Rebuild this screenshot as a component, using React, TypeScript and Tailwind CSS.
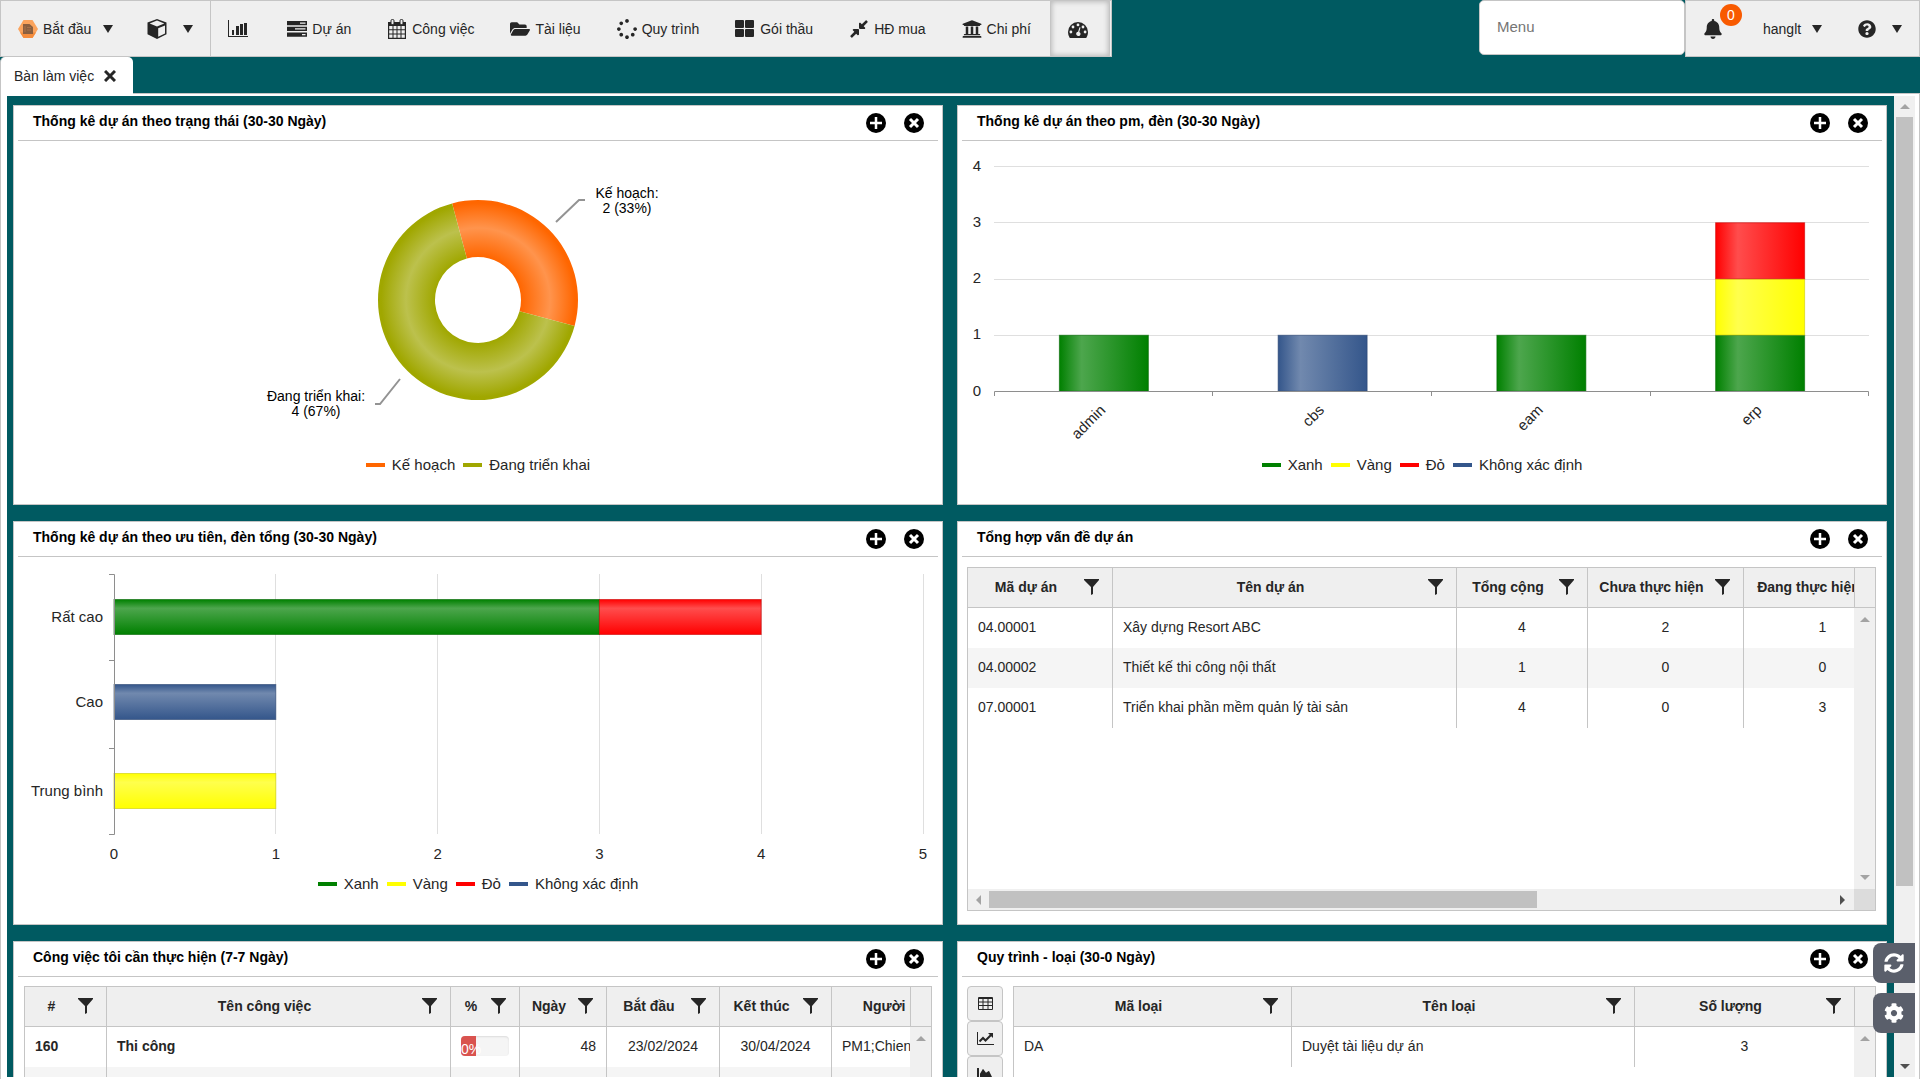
import type { ReactNode } from 'react'
import { FaBell, FaChartArea, FaCog, FaCompressAlt, FaFolderOpen, FaQuestionCircle, FaSpinner, FaSyncAlt, FaUniversity } from 'react-icons/fa'

type Tone = 'green' | 'yellow' | 'red' | 'blue'

const TONES: Record<Tone, { base: string; light: string; edge: string }> = {
  green: { base: '#008000', light: '#4da64d', edge: '#006600' },
  yellow: { base: '#ffff00', light: '#ffff4d', edge: '#cccc00' },
  red: { base: '#ff0000', light: '#ff4d4d', edge: '#cc0000' },
  blue: { base: '#34568b', light: '#7189ae', edge: '#2a456f' },
}

const LIGHT_LEGEND = [
  { label: 'Xanh', color: '#008000' },
  { label: 'Vàng', color: '#ffff00' },
  { label: 'Đỏ', color: '#ff0000' },
  { label: 'Không xác định', color: '#34568b' },
]

/* ---------- icons ---------- */

const Caret = () => (
  <svg viewBox="0 0 10 8" className="h-2 w-[10px] shrink-0 fill-current"><path d="M0 0h10L5 8z" /></svg>
)

const BarChartIcon = () => (
  <svg viewBox="0 0 20 18" className="h-[18px] w-5 fill-current">
    <path d="M0 0h1v16h19v1H0zM4 10h2v5H4zM8 6h3v9H8zM12 4h3v11h-3zM16 3h3v12h-3z" />
  </svg>
)

const TasksIcon = () => (
  <svg viewBox="0 0 20 16" className="h-4 w-5">
    <path fill="currentColor" d="M0 0h20v4.300H0zM0 5.700h20V10H0zM0 11.500h20v4.300H0z" />
    <path fill="#efefef" d="M13 1.500h5.500v1.200H13zM8 7.200h10.500v1.200H8zM15 13h3.500v1.200H15z" />
  </svg>
)

const CalendarIcon = () => (
  <svg viewBox="0 0 20 20" className="size-5">
    <path fill="currentColor" d="M1 3h18v17H1z" />
    <path fill="#efefef" d="M2.200 7h3.300v3.300H2.200zM6.500 7h3v3.300h-3zM10.500 7h3v3.300h-3zM14.500 7h3.300v3.300h-3.300zM2.200 11.300h3.300v3.100H2.200zM6.500 11.300h3v3.100h-3zM10.500 11.300h3v3.100h-3zM14.500 11.300h3.300v3.100h-3.300zM2.200 15.400h3.300v3.300H2.200zM6.500 15.400h3v3.300h-3zM10.500 15.400h3v3.300h-3zM14.500 15.400h3.300v3.300h-3.300z" />
    <rect x="4" y="0.500" width="3" height="5" rx="1.200" fill="#efefef" stroke="currentColor" />
    <rect x="13" y="0.500" width="3" height="5" rx="1.200" fill="#efefef" stroke="currentColor" />
  </svg>
)

const GridIcon = () => (
  <svg viewBox="0 0 20 17" className="h-[17px] w-5 fill-current">
    <rect x="0" y="0" width="9" height="8" rx="1" /><rect x="10" y="0" width="9" height="8" rx="1" />
    <rect x="0" y="9" width="9" height="8" rx="1" /><rect x="10" y="9" width="9" height="8" rx="1" />
  </svg>
)

const GaugeIcon = () => (
  <svg viewBox="0 0 20 16" className="h-4 w-5">
    <path fill="currentColor" d="M0 10a10 10 0 0 1 20 0c0 2.200-.6 4-1.500 5.400-.2.400-.5.600-.9.600H2.400c-.4 0-.7-.2-.9-.6A10 10 0 0 1 0 10z" />
    <g fill="#efefef">
      <circle cx="2.900" cy="10" r="1.400" /><circle cx="5" cy="5" r="1.400" /><circle cx="10" cy="2.900" r="1.400" />
      <circle cx="15" cy="5" r="1.400" /><circle cx="17.100" cy="10" r="1.400" />
      <path d="M11.500 5.200l1 .3-1.200 4.400a2.200 2.200 0 1 1-1.200-.2z" />
    </g>
  </svg>
)

const CubeIcon = () => (
  <svg viewBox="0 0 20 20" className="size-5">
    <path fill="currentColor" d="M10 0l9.500 3.600v11.600L10 20 .5 15.200V3.600z" />
    <path fill="#efefef" d="M10 1.600l7.300 2.800L10 7.400 2.700 4.400zM11.200 9.300l6.800-2.900v8l-6.800 3.300z" />
  </svg>
)

const HexIcon = () => (
  <svg viewBox="0 0 20 18" className="h-[18px] w-5">
    <path fill="#fba35c" d="M5.500 0h9L20 9l-5.500 9h-9L0 9z" />
    <path fill="#f58c3c" d="M2 12.500h16L14.500 18h-9z" />
    <path fill="#8b5f3f" d="M5 4h6.500L15 7v7H5z" />
    <path stroke="#a87048" strokeWidth="1" d="M7 6v6M9 7.500h4M9 10h4" />
  </svg>
)

const CloseIcon = () => (
  <svg viewBox="0 0 12 12" className="size-3"><path stroke="currentColor" strokeWidth="3" d="M1 1l10 10M11 1L1 11" /></svg>
)

const PlusCircle = () => (
  <svg viewBox="0 0 20 20" className="size-5"><circle cx="10" cy="10" r="10" /><path stroke="#fff" strokeWidth="2.500" d="M10 4v12M4 10h12" /></svg>
)

const CloseCircle = () => (
  <svg viewBox="0 0 20 20" className="size-5"><circle cx="10" cy="10" r="10" /><path stroke="#fff" strokeWidth="3" d="M6 6l8 8M14 6l-8 8" /></svg>
)

const FilterIcon = () => (
  <svg viewBox="0 0 15 16" className="h-4 w-[15px] fill-current"><path d="M0 0h15v1L9 8v7l-2 1V8L0 1z" /></svg>
)

const TableIcon = () => (
  <svg viewBox="0 0 15 13" className="h-[13px] w-[15px] fill-none stroke-current"><path d="M.5.500h14v12H.5zM0 1.500h15M.5 5h14M.5 8.500h14M5 1v12M10 1v12" /></svg>
)

const LineChartIcon = () => (
  <svg viewBox="0 0 17 13" className="h-[13px] w-[17px]">
    <path fill="none" stroke="currentColor" d="M.5 0v12.500H17" />
    <path fill="none" stroke="currentColor" strokeWidth="2" d="M2.500 9.500L6 6l2.500 2.500L14 3" />
    <path fill="currentColor" d="M11 1h5v5z" />
  </svg>
)

/* ---------- shell parts ---------- */

function ToolItem({ icon, label, caret }: { icon: ReactNode; label?: string; caret?: boolean }) {
  const end = caret ? 'pr-[17px]' : label ? 'pr-[19px]' : 'pr-[22px]'
  return (
    <button aria-label={label ? undefined : 'Menu'} className={`flex h-full items-center gap-[5px] pl-[17px] ${end}`}>
      <span className="flex w-5 justify-center text-xl">{icon}</span>
      {label && <span className="whitespace-nowrap">{label}</span>}
      {caret && <span className={label ? 'pl-[7px]' : 'pl-[11px]'}><Caret /></span>}
    </button>
  )
}

function Panel({ title, className, children }: { title: string; className: string; children: ReactNode }) {
  return (
    <section className={`flex min-w-0 flex-col border border-[#c5c5c5] bg-white ${className}`}>
      <header className="mx-1 flex h-[35px] shrink-0 items-center border-b border-[#c5c5c5] pr-[14px] pl-[15px]">
        <h2 className="flex-1 pb-1 text-sm font-bold text-black">{title}</h2>
        <div className="flex gap-[18px]">
          <button aria-label="Mở rộng"><PlusCircle /></button>
          <button aria-label="Đóng"><CloseCircle /></button>
        </div>
      </header>
      {children}
    </section>
  )
}

function Arrow({ dir, dark }: { dir: 'up' | 'down' | 'left' | 'right'; dark?: boolean }) {
  const d = { up: 'M0 7l5-5 5 5z', down: 'M0 3l5 5 5-5z', left: 'M7 0L2 5l5 5z', right: 'M3 0l5 5-5 5z' }[dir]
  return <svg viewBox="0 0 10 10" className={`size-[10px] ${dark ? 'fill-[#505050]' : 'fill-[#a3a3a3]'}`}><path d={d} /></svg>
}

/* ---------- charts ---------- */

function Legend({ items }: { items: { label: string; color: string }[] }) {
  return (
    <ul className="flex h-5 items-center justify-center gap-2 text-[15px]">
      {items.map(i => (
        <li key={i.label} className="flex items-center gap-[7px]">
          <span className="h-1 w-[19px]" style={{ background: i.color }} />
          {i.label}
        </li>
      ))}
    </ul>
  )
}

function ToneGradients({ id, vertical }: { id: string; vertical?: boolean }) {
  return (
    <defs>
      {(Object.keys(TONES) as Tone[]).map(t => (
        <linearGradient key={t} id={`${id}-${t}`} x1="0" y1="0" x2={vertical ? 0 : 1} y2={vertical ? 1 : 0}>
          <stop offset="0" stopColor={TONES[t].base} />
          <stop offset="0.25" stopColor={TONES[t].light} />
          <stop offset="1" stopColor={TONES[t].base} />
        </linearGradient>
      ))}
    </defs>
  )
}

function arc(cx: number, cy: number, r0: number, r1: number, from: number, to: number) {
  const p = (r: number, deg: number) => {
    const a = ((deg - 90) * Math.PI) / 180
    return `${cx + r * Math.cos(a)} ${cy + r * Math.sin(a)}`
  }
  const large = to - from > 180 ? 1 : 0
  return `M${p(r1, from)}A${r1} ${r1} 0 ${large} 1 ${p(r1, to)}L${p(r0, to)}A${r0} ${r0} 0 ${large} 0 ${p(r0, from)}Z`
}

function DonutChart() {
  const slices = [
    { id: 'plan', base: '#ff6600', light: '#ff944d', from: -15, to: 105 },
    { id: 'doing', base: '#a0a700', light: '#bcc14d', from: 105, to: 345 },
  ]
  return (
    <svg viewBox="0 0 928 314" className="w-full fill-black text-sm">
      <defs>
        {slices.map(s => (
          <radialGradient key={s.id} id={s.id} gradientUnits="userSpaceOnUse" cx="464" cy="159" r="100">
            <stop offset="0.43" stopColor={s.base} />
            <stop offset="0.72" stopColor={s.light} />
            <stop offset="0.97" stopColor={s.base} />
          </radialGradient>
        ))}
      </defs>
      {slices.map(s => <path key={s.id} d={arc(464, 159, 43, 100, s.from, s.to)} fill={`url(#${s.id})`} />)}
      <path d="M542 81L565 59h6M386 238l-20 25h-5" fill="none" stroke="#939393" strokeWidth="2" />
      <g textAnchor="middle">
        <text x="613" y="57">Kế hoạch:</text>
        <text x="613" y="72">2 (33%)</text>
        <text x="302" y="260">Đang triển khai:</text>
        <text x="302" y="275">4 (67%)</text>
      </g>
    </svg>
  )
}

function ColumnChart() {
  const columns: { name: string; stack: Tone[] }[] = [
    { name: 'admin', stack: ['green'] },
    { name: 'cbs', stack: ['blue'] },
    { name: 'eam', stack: ['green'] },
    { name: 'erp', stack: ['green', 'yellow', 'red'] },
  ]
  const y = (v: number) => 250.5 - v * 56.25
  return (
    <svg viewBox="0 0 928 314" className="w-full fill-[#262626] text-[15px]">
      <ToneGradients id="col" />
      {[0, 1, 2, 3, 4].map(v => (
        <g key={v}>
          {v > 0 && <path d={`M36 ${Math.floor(y(v)) + 0.5}h875`} stroke="#dfdfdf" />}
          <text x="19" y={y(v) + 4} textAnchor="middle">{v}</text>
        </g>
      ))}
      {columns.map((c, i) => {
        const mid = 36 + 218.75 * (i + 0.5)
        return (
          <g key={c.name}>
            {c.stack.map((t, n) => (
              <rect key={n} x={mid - 44} y={y(n + 1)} width="89" height="56" fill={`url(#col-${t})`} stroke={TONES[t].edge} strokeOpacity="0.6" />
            ))}
            <text x={mid + 3} y="270" textAnchor="end" transform={`rotate(-45 ${mid + 3} 270)`}>{c.name}</text>
          </g>
        )
      })}
      <path d="M36.500 255v-4.500h874v4.500M254.500 250v5M473.500 250v5M692.500 250v5" fill="none" stroke="#8e8e8e" />
    </svg>
  )
}

function BarChart() {
  const rows: { name: string; top: number; parts: { tone: Tone; from: number; to: number }[] }[] = [
    { name: 'Rất cao', top: 43, parts: [{ tone: 'green', from: 0, to: 3 }, { tone: 'red', from: 3, to: 4 }] },
    { name: 'Cao', top: 128, parts: [{ tone: 'blue', from: 0, to: 1 }] },
    { name: 'Trung bình', top: 217, parts: [{ tone: 'yellow', from: 0, to: 1 }] },
  ]
  const x = (v: number) => 100 + v * 161.8
  return (
    <svg viewBox="0 0 928 317" className="w-full fill-[#262626] text-[15px]">
      <ToneGradients id="bar" vertical />
      {[0, 1, 2, 3, 4, 5].map(v => (
        <g key={v}>
          {v > 0 && <path d={`M${Math.floor(x(v)) + 0.5} 17v260`} stroke="#dfdfdf" />}
          <text x={x(v)} y="302" textAnchor="middle">{v}</text>
        </g>
      ))}
      {rows.map(r => (
        <g key={r.name}>
          {r.parts.map(p => (
            <rect key={p.tone} x={x(p.from)} y={r.top - 0.5} width={x(p.to) - x(p.from)} height="35" fill={`url(#bar-${p.tone})`} stroke={TONES[p.tone].edge} strokeOpacity="0.6" />
          ))}
          <text x="89" y={r.top + 22} textAnchor="end">{r.name}</text>
        </g>
      ))}
      <path d="M95 17.500h5.500v260H95M95 103.500h5M95 191.500h5" fill="none" stroke="#8e8e8e" />
    </svg>
  )
}

/* ---------- grids ---------- */

interface Column {
  title: string
  width?: number
  align?: string
}

function DataGrid({ columns, rows, tableClass, bold = [], children, className = '' }: {
  columns: Column[]
  rows: ReactNode[][]
  tableClass: string
  bold?: number[]
  children?: ReactNode
  className?: string
}) {
  return (
    <div className={`flex min-w-0 flex-1 flex-col border border-[#c5c5c5] ${className}`}>
      <div className="flex min-h-0 flex-1">
        <div className="min-w-0 flex-1 overflow-hidden">
          <table className={`table-fixed border-separate border-spacing-0 ${tableClass}`}>
            <colgroup>
              {columns.map(c => <col key={c.title} style={{ width: c.width }} />)}
            </colgroup>
            <thead>
              <tr className="h-10 bg-[#efefef]">
                {columns.map(c => (
                  <th key={c.title} className="border-r border-b border-[#c5c5c5] p-0 pr-[13px] pb-[2px] last:border-r-0">
                    <div className="flex items-center">
                      <span className="flex-1 text-center whitespace-nowrap">{c.title}</span>
                      <button aria-label={`Lọc ${c.title}`}><FilterIcon /></button>
                    </div>
                  </th>
                ))}
              </tr>
            </thead>
            <tbody>
              {rows.map((r, i) => (
                <tr key={i} className="h-10 even:bg-[#f5f5f5]">
                  {r.map((cell, n) => (
                    <td key={n} className={`border-r border-[#c5c5c5] px-[10px] pt-0 pb-[2px] whitespace-nowrap last:border-r-0 ${columns[n].align ?? 'text-left'} ${bold.includes(n) ? 'font-bold' : ''}`}>
                      {cell}
                    </td>
                  ))}
                </tr>
              ))}
            </tbody>
          </table>
        </div>
        <div className="flex w-[21px] shrink-0 flex-col bg-[#f0f0f0]">
          <div className="h-10 shrink-0 border-b border-l border-[#c5c5c5] bg-[#efefef]" />
          <div className="flex flex-1 flex-col items-center justify-between py-[7px]">
            <Arrow dir="up" />
            <Arrow dir="down" />
          </div>
        </div>
      </div>
      {children}
    </div>
  )
}

function IssueGrid() {
  return (
    <DataGrid
      className="mt-[10px] mr-[10px] mb-[13px] ml-[9px]"
      tableClass="w-[933px]"
      columns={[
        { title: 'Mã dự án', width: 145 },
        { title: 'Tên dự án', width: 344 },
        { title: 'Tổng cộng', width: 131, align: 'text-center' },
        { title: 'Chưa thực hiện', width: 156, align: 'text-center' },
        { title: 'Đang thực hiện', width: 157, align: 'text-center' },
      ]}
      rows={[
        ['04.00001', 'Xây dựng Resort ABC', 4, 2, 1],
        ['04.00002', 'Thiết kế thi công nội thất', 1, 0, 0],
        ['07.00001', 'Triển khai phần mềm quản lý tài sản', 4, 0, 3],
      ]}
    >
      <div className="flex h-[21px] shrink-0 bg-[#f0f0f0]">
        <div className="flex flex-1 items-center pr-[7px] pl-[6px]">
          <Arrow dir="left" />
          <div className="flex-1 px-[5px]"><div className="h-[17px] w-[65%] bg-[#c1c1c1]" /></div>
          <Arrow dir="right" dark />
        </div>
        <div className="w-[21px] bg-[#dcdcdc]" />
      </div>
    </DataGrid>
  )
}

const Progress = ({ value }: { value: number }) => (
  <div role="progressbar" aria-valuenow={value} className="h-5 overflow-hidden rounded bg-[#f5f5f5] shadow-[inset_0_1px_2px_rgba(0,0,0,0.1)]">
    <div className="h-full w-[15px] bg-[#d9534f] pt-[3px] leading-5 text-white">{value}%</div>
  </div>
)

function TaskGrid() {
  return (
    <DataGrid
      className="mt-[9px] mr-[10px] ml-[10px]"
      tableClass="w-[1007px]"
      bold={[0, 1]}
      columns={[
        { title: '#', width: 82 },
        { title: 'Tên công việc', width: 344 },
        { title: '%', width: 69 },
        { title: 'Ngày', width: 87, align: 'text-right' },
        { title: 'Bắt đầu', width: 113, align: 'text-center' },
        { title: 'Kết thúc', width: 112, align: 'text-center' },
        { title: 'Người phụ trách', width: 200 },
      ]}
      rows={[
        ['160', 'Thi công', <Progress value={0} />, 48, '23/02/2024', '30/04/2024', 'PM1;Chien'],
        ['', '', '', '', '', '', ''],
      ]}
    />
  )
}

function ProcessGrid() {
  const views = [
    { label: 'Bảng', icon: <TableIcon /> },
    { label: 'Biểu đồ đường', icon: <LineChartIcon /> },
    { label: 'Biểu đồ vùng', icon: <FaChartArea /> },
  ]
  return (
    <div className="mt-[9px] mr-[10px] ml-[9px] flex flex-1 gap-[10px]">
      <div className="flex w-9 flex-col">
        {views.map(v => (
          <button key={v.label} aria-label={v.label} className="flex h-[35px] items-center justify-center rounded border border-[#c5c5c5] bg-[#efefef] text-base">
            {v.icon}
          </button>
        ))}
      </div>
      <DataGrid
        tableClass="w-full"
        columns={[
          { title: 'Mã loại', width: 278 },
          { title: 'Tên loại', width: 343 },
          { title: 'Số lượng', align: 'text-center' },
        ]}
        rows={[['DA', 'Duyệt tài liệu dự án', 3]]}
      />
    </div>
  )
}

export default function App() {
  return (
    <div className="flex h-screen flex-col overflow-hidden bg-[#005a61] font-['Liberation_Sans',Arial,sans-serif] text-sm text-[#262626]">
      <div className="flex h-[57px] shrink-0 items-start">
        <nav className="flex h-full border border-[#c5c5c5] bg-[#efefef]">
          <div className="flex border-r border-[#c5c5c5]">
            <ToolItem icon={<HexIcon />} label="Bắt đầu" caret />
            <ToolItem icon={<CubeIcon />} caret />
          </div>
          <ToolItem icon={<BarChartIcon />} />
          <ToolItem icon={<TasksIcon />} label="Dự án" />
          <ToolItem icon={<CalendarIcon />} label="Công việc" />
          <ToolItem icon={<FaFolderOpen />} label="Tài liệu" />
          <ToolItem icon={<FaSpinner />} label="Quy trình" />
          <ToolItem icon={<GridIcon />} label="Gói thầu" />
          <ToolItem icon={<FaCompressAlt />} label="HĐ mua" />
          <ToolItem icon={<FaUniversity />} label="Chi phí" />
          <button aria-label="Bàn làm việc" className="mr-px flex h-full items-center border-x border-[#c5c5c5] pt-[2px] pr-[21px] pl-[17px] shadow-[inset_0_0_5px_1px_#bbb]">
            <GaugeIcon />
          </button>
        </nav>
        <div className="flex-1" />
        <input
          aria-label="Menu"
          placeholder="Menu"
          className="h-[55px] w-[206px] rounded-[5px] border border-[#c5c5c5] bg-white px-[17px] pb-[2px] text-[15px] placeholder-[#757575] outline-none"
        />
        <div className="flex h-full w-[235px] items-center border border-[#c5c5c5] bg-[#efefef] pl-[17px]">
          <button aria-label="Thông báo" className="relative w-5 text-xl">
            <FaBell />
            <span className="absolute -top-[15px] left-[17px] flex size-[22px] items-center justify-center rounded-full bg-[#f85a00] text-sm text-white">0</span>
          </button>
          <button className="ml-10 flex items-center gap-[11px]">hanglt <Caret /></button>
          <button aria-label="Trợ giúp" className="ml-9 flex items-center gap-4 text-lg"><FaQuestionCircle /><Caret /></button>
        </div>
      </div>

      <div className="z-10 -mb-px flex h-[37px] shrink-0">
        <div className="flex w-[133px] items-center gap-[10px] rounded-t-[5px] border-l border-[#c5c5c5] bg-white pl-[13px]">
          <span className="whitespace-nowrap">Bàn làm việc</span>
          <button aria-label="Đóng thẻ"><CloseIcon /></button>
        </div>
      </div>

      <main className="flex min-h-0 flex-1 border-x border-t border-[#c5c5c5] bg-white pt-[2px] pr-1 pb-[2px] pl-[6px]">
        <div className="min-w-0 flex-1 overflow-hidden bg-[#005a61] pt-[9px] pr-[7px] pl-[6px]">
          <div className="grid grid-cols-2 gap-x-[14px] gap-y-4">
            <Panel title="Thống kê dự án theo trạng thái (30-30 Ngày)" className="min-h-[400px]">
              <DonutChart />
              <Legend items={[{ label: 'Kế hoạch', color: '#ff6600' }, { label: 'Đang triển khai', color: '#a0a700' }]} />
            </Panel>
            <Panel title="Thống kê dự án theo pm, đèn (30-30 Ngày)" className="min-h-[400px]">
              <ColumnChart />
              <Legend items={LIGHT_LEGEND} />
            </Panel>
            <Panel title="Thống kê dự án theo ưu tiên, đèn tổng (30-30 Ngày)" className="min-h-[404px]">
              <BarChart />
              <Legend items={LIGHT_LEGEND} />
            </Panel>
            <Panel title="Tổng hợp vấn đề dự án" className="min-h-[404px]">
              <IssueGrid />
            </Panel>
            <Panel title="Công việc tôi cần thực hiện (7-7 Ngày)" className="min-h-[400px]">
              <TaskGrid />
            </Panel>
            <Panel title="Quy trình - loại (30-0 Ngày)" className="min-h-[400px]">
              <ProcessGrid />
            </Panel>
          </div>
        </div>
        <div className="flex w-[21px] shrink-0 flex-col items-center bg-[#f0f0f0] pt-[6px] pb-[6px]">
          <Arrow dir="up" />
          <div className="mt-[5px] w-[17px] basis-[769px] bg-[#c1c1c1]" />
          <div className="flex-1" />
          <Arrow dir="down" dark />
        </div>
      </main>

      <div className="fixed right-[5px] bottom-[46px] z-20 flex flex-col gap-[10px] text-xl text-white">
        <button aria-label="Làm mới" className="flex h-10 w-[42px] items-center justify-center rounded-l-lg bg-[#5a5f6b]"><FaSyncAlt /></button>
        <button aria-label="Cài đặt" className="flex h-10 w-[42px] items-center justify-center rounded-l-lg bg-[#5a5f6b]"><FaCog /></button>
      </div>
    </div>
  )
}
